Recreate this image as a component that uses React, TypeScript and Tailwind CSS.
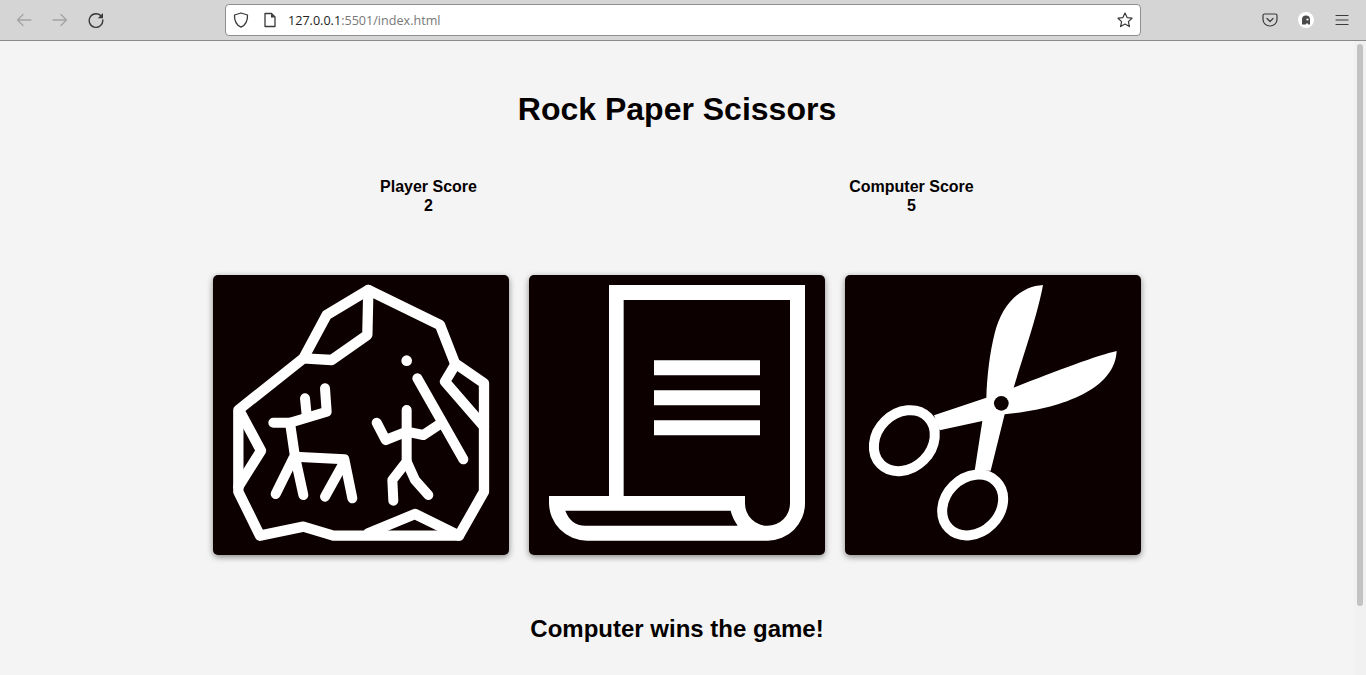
import React from "react";

const cardFill = "#0c0000";

const RockIcon = () => (
    <svg viewBox="24 15 888 840" className="w-full h-full">
        <g fill="none" stroke="#fff" strokeWidth="31" strokeLinejoin="round" strokeLinecap="round">
            <path d="M100 420L295 265L365 135L490 60L705 165L750 280L837 340V665L762 797H385L295 770L165 797L100 665Z" />
            <path d="M295 265L380 270L487 195L490 60" />
            <path d="M750 285L720 335L837 470" />
            <path d="M105 425L168 542L100 650" />
            <path d="M490 790L630 732L762 797" />
            <g strokeWidth="30">
                <path d="M205 458H255L365 425L360 355" />
                <path d="M300 385L305 435" />
                <path d="M255 458L270 560L295 675" />
                <path d="M265 565L212 672" />
                <path d="M270 560L418 568L442 685" />
                <path d="M410 590L360 680" />
                <path d="M637 325L775 568" />
                <path d="M605 420V575L562 630L565 692" />
                <path d="M605 575L630 630L670 675" />
                <path d="M515 458L542 510L605 485L655 495L705 462" />
            </g>
        </g>
        <circle cx="605" cy="272" r="16" fill="#fff" />
    </svg>
);

const PaperIcon = () => (
    <svg viewBox="21 15 888 840" className="w-full h-full">
        <path
            fill="#fff"
            fillRule="evenodd"
            d="M81 678H261V45H849V700A112 112 0 0 1 737 812H195A114 114 0 0 1 81 698ZM305 90V678H669V700A67 67 0 0 0 804 700V90ZM130 722C140 750 160 767 190 767H647C640 755 632 745 626 722Z"
        />
        <path fill="#fff" d="M396 271H714V316H396ZM396 361H714V406H396ZM396 451H714V496H396Z" />
    </svg>
);

const ScissorsIcon = () => (
    <svg viewBox="21 15 888 840" className="w-full h-full">
        <path
            fill="#fff"
            d="M615 45C540 50 490 110 470 190C455 250 447 320 445 383L288 436L305 481L433 453L410 602L458 602L500 433C640 420 830 370 836 243C780 255 650 305 527 353C555 260 600 130 615 45Z"
        />
        <circle cx="490" cy="400" r="22" fill={cardFill} />
        <g fill="none" stroke="#fff" strokeWidth="30">
            <ellipse cx="199" cy="512" rx="100" ry="82" transform="rotate(-45 199 512)" />
            <ellipse cx="404" cy="705" rx="100" ry="82" transform="rotate(-45 404 705)" />
        </g>
    </svg>
);

const Toolbar = () => (
    <div className="h-[41px] shrink-0 flex items-center bg-[#d5d5d5] border-b border-[#8a8a8a] text-[#3a3a3a]">
        <div className="w-[225px] shrink-0 flex items-center">
            <svg viewBox="0 0 16 16" className="w-4 h-4 ml-4 text-[#a3a3a3]" fill="none" stroke="currentColor" strokeWidth="1.3" strokeLinecap="round" strokeLinejoin="round">
                <path d="M15 8H1.5M7 2.5L1.5 8L7 13.5" />
            </svg>
            <svg viewBox="0 0 16 16" className="w-4 h-4 ml-5 text-[#a3a3a3]" fill="none" stroke="currentColor" strokeWidth="1.3" strokeLinecap="round" strokeLinejoin="round">
                <path d="M1 8H14.5M9 2.5L14.5 8L9 13.5" />
            </svg>
            <svg viewBox="0 0 16 16" className="w-4 h-4 ml-5" fill="none" stroke="currentColor" strokeWidth="1.4" strokeLinecap="round" strokeLinejoin="round">
                <path d="M13.5 4.5A6.8 6.8 0 1 0 14.8 8" />
                <path fill="currentColor" stroke="none" d="M15 1V6.2H9.8Z" />
            </svg>
        </div>
        <div className="w-[916px] h-[32px] shrink-0 flex items-center bg-white border border-[#8f8f8f] rounded-[4px]">
            <svg viewBox="0 0 16 16" className="w-4 h-4 ml-[7px]" fill="none" stroke="currentColor" strokeWidth="1.3" strokeLinejoin="round">
                <path d="M8 1L14.5 3C14.8 9 12.5 13 8 15.2C3.5 13 1.2 9 1.5 3Z" />
            </svg>
            <svg viewBox="0 0 16 16" className="w-4 h-4 ml-[13px]" fill="none" stroke="currentColor" strokeWidth="1.3" strokeLinejoin="round">
                <path d="M3 1.5H9.5L13 5V14.5H3Z" />
                <path fill="currentColor" stroke="none" d="M9 1.5L13 5.5H9Z" />
            </svg>
            <div className="ml-[10px] mt-[2px] text-[12.6px] font-['Open_Sans',sans-serif] text-[#777]">
                <span className="text-[#222]">127.0.0.1</span>:5501/index.html
            </div>
            <svg viewBox="0 0 16 16" className="w-4 h-4 ml-auto mr-[7px]" fill="none" stroke="currentColor" strokeWidth="1.2" strokeLinejoin="round">
                <path d="M8 1L10.1 5.6L15 6.2L11.4 9.6L12.4 14.6L8 12.1L3.6 14.6L4.6 9.6L1 6.2L5.9 5.6Z" />
            </svg>
        </div>
        <svg viewBox="0 0 16 16" className="w-4 h-4 ml-[121px]" fill="none" stroke="currentColor" strokeWidth="1.2" strokeLinecap="round" strokeLinejoin="round">
            <path d="M2.5 2H13.5C14.3 2 15 2.7 15 3.5V7.5C15 11.2 11.8 14 8 14C4.2 14 1 11.2 1 7.5V3.5C1 2.7 1.7 2 2.5 2Z" />
            <path d="M5 6.5L8 9.5L11 6.5" />
        </svg>
        <div className="w-4 h-4 ml-5 rounded-full bg-white flex items-center justify-center">
            <svg viewBox="0 0 10 10" className="w-[10px] h-[10px]">
                <path fill="#4a4a4a" d="M1 9.5V4.5A4 4 0 0 1 9 4.5V9.5H7V8.5H5V9.5Z" />
                <circle cx="6.5" cy="4.5" r="1.1" fill="#fff" />
            </svg>
        </div>
        <svg viewBox="0 0 16 16" className="w-4 h-4 ml-5" fill="none" stroke="currentColor" strokeWidth="1.2" strokeLinecap="round">
            <path d="M2 3.5H14M2 8H14M2 12.5H14" />
        </svg>
    </div>
);

export default function App() {
    return (
        <div className="h-screen overflow-hidden flex flex-col bg-[#f4f4f4] text-[#050000] font-['Liberation_Sans',Arial,sans-serif]">
            <Toolbar />
            <div className="flex-1 flex min-h-0">
                <main className="flex-1 flex flex-col items-center pt-[50px] min-w-0">
                    <h1 className="text-[32px] leading-[37px] font-bold">Rock Paper Scissors</h1>
                    <div className="flex mt-[49px] pr-[14px] font-bold text-[16px] leading-[19px] text-center">
                        <div className="w-[483px]">
                            <div>Player Score</div>
                            <div>2</div>
                        </div>
                        <div className="w-[483px]">
                            <div>Computer Score</div>
                            <div>5</div>
                        </div>
                    </div>
                    <div className="flex gap-5 mt-[60px]">
                        <div className="w-[296px] h-[280px] rounded-[5px] bg-[#0c0000] shadow-[0_2px_6px_rgba(0,0,0,0.45)] overflow-hidden">
                            <RockIcon />
                        </div>
                        <div className="w-[296px] h-[280px] rounded-[5px] bg-[#0c0000] shadow-[0_2px_6px_rgba(0,0,0,0.45)] overflow-hidden">
                            <PaperIcon />
                        </div>
                        <div className="w-[296px] h-[280px] rounded-[5px] bg-[#0c0000] shadow-[0_2px_6px_rgba(0,0,0,0.45)] overflow-hidden">
                            <ScissorsIcon />
                        </div>
                    </div>
                    <h2 className="mt-[60px] text-[24px] leading-[27px] font-bold">Computer wins the game!</h2>
                </main>
                <div className="w-3 shrink-0 pt-[3px] pl-[3px] bg-[#f1f1f1]">
                    <div className="w-[6px] h-[562px] rounded-full bg-[#c2c2c2]" />
                </div>
            </div>
        </div>
    );
}
